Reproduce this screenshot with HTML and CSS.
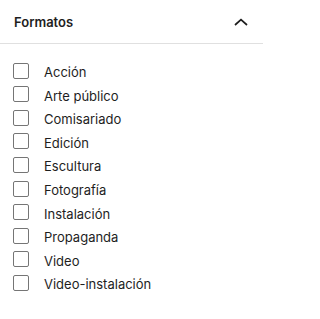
FILE: index.html
```html
<!DOCTYPE html>
<html lang="es">
<head>
<meta charset="utf-8">
<link rel="stylesheet" href="styles.css">
</head>
<body>
<div class="panel">
  <div class="panel-header">
    <span class="panel-title">Formatos</span>
    <svg class="chevron" viewBox="0 0 24 24" width="24" height="24"><polyline points="6,15 12,9.6 18,15"/></svg>
  </div>
  <ul class="terms">
    <li class="term"><span class="box"></span><span class="label">Acción</span></li>
    <li class="term"><span class="box"></span><span class="label">Arte público</span></li>
    <li class="term"><span class="box"></span><span class="label">Comisariado</span></li>
    <li class="term"><span class="box"></span><span class="label">Edición</span></li>
    <li class="term"><span class="box"></span><span class="label">Escultura</span></li>
    <li class="term"><span class="box"></span><span class="label">Fotografía</span></li>
    <li class="term"><span class="box"></span><span class="label">Instalación</span></li>
    <li class="term"><span class="box"></span><span class="label">Propaganda</span></li>
    <li class="term"><span class="box"></span><span class="label">Video</span></li>
    <li class="term"><span class="box"></span><span class="label">Video-instalación</span></li>
  </ul>
</div>
</body>
</html>
```
FILE: styles.css
```css
html, body {
  margin: 0;
  padding: 0;
  background: #fff;
}
body {
  font-family: Inter, "Noto Sans", sans-serif;
  color: #1e1e1e;
  width: 263px;
  height: 319px;
  overflow: hidden;
}
.panel-header {
  height: 44px;
  box-sizing: border-box;
  border-bottom: 1px solid #e0e0e0;
  display: flex;
  align-items: center;
  justify-content: space-between;
  padding: 0 10px 0 14px;
}
.panel-title {
  font-size: 13px;
  font-weight: 600;
  padding-top: 1px;
}
.chevron {
  fill: none;
  stroke: #1e1e1e;
  stroke-width: 1.7;
  margin-top: 1px;
}
.terms {
  list-style: none;
  margin: 0;
  padding: 15px 0 0 13px;
}
.term {
  display: flex;
  align-items: center;
  height: 23.56px;
}
.box {
  width: 16px;
  height: 16px;
  box-sizing: border-box;
  border: 1px solid #757575;
  border-radius: 2px;
  flex: none;
}
.label {
  font-size: 13px;
  margin-left: 15px;
  padding-top: 3px;
}
```
